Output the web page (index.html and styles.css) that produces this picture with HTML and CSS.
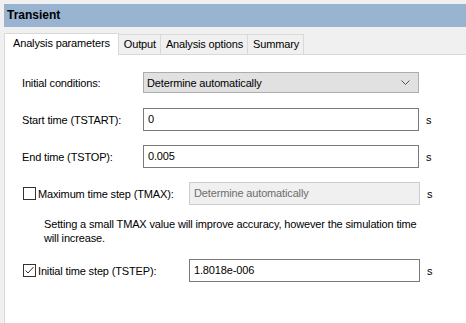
FILE: index.html
```html
<!DOCTYPE html>
<html lang="en">

<head>
  <meta charset="utf-8" />
  <title>Transient</title>
  <link rel="stylesheet" href="styles.css">
</head>

<body>
  <div class="title">Transient</div>

  <ul class="tabs">
    <li class="tab active">Analysis parameters</li>
    <li class="tab">Output</li>
    <li class="tab">Analysis options</li>
    <li class="tab">Summary</li>
  </ul>

  <div class="panel">
    <div class="row">
      <span class="label">Initial conditions:</span>
      <div class="select">
        <span>Determine automatically</span>
        <svg class="chevron" width="9" height="5" viewBox="0 0 9 5">
          <path d="M0.5 0.5 L4.5 4.5 L8.5 0.5" fill="none" stroke="#555" stroke-width="1" />
        </svg>
      </div>
    </div>

    <div class="row">
      <span class="label">Start time (TSTART):</span>
      <div class="field">0</div>
      <span class="unit">s</span>
    </div>

    <div class="row">
      <span class="label">End time (TSTOP):</span>
      <div class="field">0.005</div>
      <span class="unit">s</span>
    </div>

    <div class="row">
      <span class="check"></span>
      <span class="check-label">Maximum time step (TMAX):</span>
      <div class="field short disabled">Determine automatically</div>
      <span class="unit">s</span>
    </div>

    <p class="note">Setting a small TMAX value will improve accuracy, however the simulation time will increase.</p>

    <div class="row">
      <span class="check">
        <svg width="11" height="11" viewBox="0 0 11 11">
          <path d="M1.5 5.5 L4 8 L9.5 2" fill="none" stroke="#333" stroke-width="1" />
        </svg>
      </span>
      <span class="check-label">Initial time step (TSTEP):</span>
      <div class="field short">1.8018e-006</div>
      <span class="unit">s</span>
    </div>
  </div>
</body>

</html>
```

FILE: styles.css
```css
* {
  box-sizing: border-box;
}

html,
body {
  height: 100%;
}

body {
  margin: 0;
  padding: 4px 0 0 4px;
  background-color: #f0f0f0;
  color: #000;
  font: 11px "Liberation Sans", Arial, sans-serif;
  letter-spacing: -0.15px;
  display: flex;
  flex-direction: column;
  overflow: hidden;
}

/* window caption */
.title {
  height: 23px;
  line-height: 23px;
  padding-left: 3px;
  background-color: #99b4d1;
  font-size: 12px;
  font-weight: bold;
  letter-spacing: 0;
}

/* tab strip */
.tabs {
  list-style: none;
  margin: 5px 0 0;
  padding: 0;
  display: flex;
  align-items: flex-end;
  height: 22px;
}

.tab {
  height: 20px;
  line-height: 19px;
  padding: 0 4px 0 5px;
  border: 1px solid #d9d9d9;
  border-bottom: none;
  border-left: none;
}

.tab.active {
  height: 22px;
  line-height: 19px;
  padding: 0 8px 0 8px;
  background-color: #fff;
  border-left: 1px solid #d9d9d9;
  position: relative;
  top: 1px;
}

.panel {
  flex: 1;
  background-color: #fff;
  border-top: 1px solid #d9d9d9;
  border-left: 1px solid #d9d9d9;
  padding: 16px 0 0 17px;
}

.row {
  display: flex;
  align-items: center;
  height: 23px;
  margin-bottom: 14px;
}

.label {
  width: 121px;
}

.select {
  width: 276px;
  height: 21px;
  background-color: #e1e1e1;
  border: 1px solid #adadad;
  padding: 0 8px 0 3px;
  display: flex;
  align-items: center;
  justify-content: space-between;
}

.field {
  width: 276px;
  height: 23px;
  line-height: 21px;
  border: 1px solid #7a7a7a;
  padding: 0 4px;
  background-color: #fff;
}

.field.short {
  width: 231px;
}

.field.disabled {
  background-color: #f0f0f0;
  border-color: #cccccc;
  color: #6d6d6d;
}

.unit {
  margin-left: 7px;
}

.check {
  width: 13px;
  height: 13px;
  margin-left: 1px;
  border: 1px solid #333;
  background-color: #fff;
  display: flex;
  align-items: center;
  justify-content: center;
}

.check-label {
  width: 151px;
  margin-left: 2px;
}

.note {
  margin: -2px 0 14px 22px;
  width: 390px;
  line-height: 14px;
}
```
